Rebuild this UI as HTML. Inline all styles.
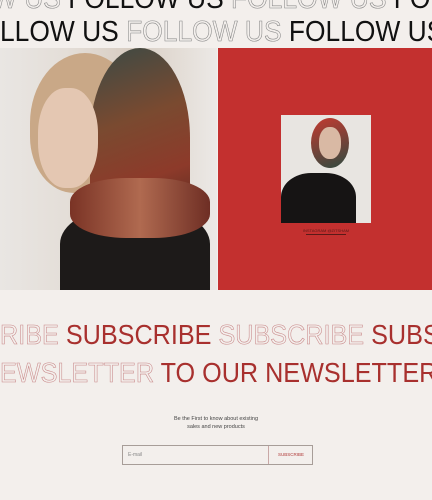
<!DOCTYPE html>
<html><head><meta charset="utf-8"><style>
*{margin:0;padding:0;box-sizing:border-box}
body{width:432px;height:500px;background:#f3efec;overflow:hidden;position:relative;font-family:"Liberation Sans",sans-serif}
.clip{position:absolute;left:0;width:432px;overflow:hidden}
.row{position:absolute;white-space:nowrap;font-family:"Liberation Sans",sans-serif;transform-origin:0 0}
.k{color:#111}.ko{color:transparent;-webkit-text-stroke:.6px #888}
.r{color:#a8302e}.ro{color:transparent;-webkit-text-stroke:.6px #c9898a}
</style></head><body>
<div class="clip" style="top:0;height:48px">
<div class="row" style="top:-16px;left:-8px;font-size:29px;line-height:30px;transform:scaleX(.91)"><span class="ko">W US </span><span class="k">FOLLOW US </span><span class="ko">FOLLOW US </span><span class="k">FO</span></div>
<div class="row" style="top:17px;left:0px;font-size:29px;line-height:30px;transform:scaleX(.91)"><span class="k">LLOW US </span><span class="ko">FOLLOW US </span><span class="k">FOLLOW US</span></div>
</div>

<div style="position:absolute;left:0;top:48px;width:217px;height:242px;background:linear-gradient(90deg,#e9e6e3 0%,#e4ded8 30%,#d8cdc2 60%,#ece9e6 100%);overflow:hidden">
 <div style="position:absolute;left:30px;top:5px;width:110px;height:140px;border-radius:50% 50% 40% 40%;background:#c9a887"></div>
 <div style="position:absolute;left:90px;top:0px;width:100px;height:180px;border-radius:50% 50% 20% 20%;background:linear-gradient(160deg,#3b4a45,#7a4a30 40%,#8d3a2a 70%,#4a2a20)"></div>
 <div style="position:absolute;left:38px;top:40px;width:60px;height:100px;border-radius:45%;background:#e4c7b2"></div>
 <div style="position:absolute;left:60px;top:160px;width:150px;height:90px;border-radius:40% 40% 0 0;background:#1d1a19"></div>
 <div style="position:absolute;left:70px;top:130px;width:140px;height:60px;border-radius:40%;background:linear-gradient(90deg,#7a3325,#b06a50,#6e2e24)"></div>
</div>
<div style="position:absolute;left:218px;top:48px;width:214px;height:242px;background:#c3302f">
 <div style="position:absolute;left:63px;top:67px;width:90px;height:108px;background:#e8e5e1;overflow:hidden">
  <div style="position:absolute;left:30px;top:3px;width:38px;height:50px;border-radius:50%;background:linear-gradient(160deg,#c43a30,#2f4a40)"></div>
  <div style="position:absolute;left:38px;top:12px;width:22px;height:32px;border-radius:45%;background:#d9b9a4"></div>
  <div style="position:absolute;left:0;top:58px;width:75px;height:60px;border-radius:40% 40% 0 0;background:#161414"></div>
 </div>
 <div style="position:absolute;left:63px;top:180px;width:90px;text-align:center;font-size:4px;color:#5a1a18">INSTAGRAM @ZITSHAM</div>
 <div style="position:absolute;left:88px;top:186px;width:40px;height:1px;background:#5a1a18"></div>
</div>

<div class="clip" style="top:300px;height:100px">
<div class="row" style="top:19px;left:0px;font-size:28px;line-height:32px;transform:scaleX(.9)"><span class="ro">RIBE </span><span class="r">SUBSCRIBE </span><span class="ro">SUBSCRIBE </span><span class="r">SUBS</span></div>
<div class="row" style="top:57px;left:0px;font-size:28px;line-height:32px;transform:scaleX(.9)"><span class="ro">EWSLETTER </span><span class="r">TO OUR NEWSLETTER</span></div>
</div>

<div style="position:absolute;left:0;width:432px;top:415px;text-align:center;font-size:5.5px;line-height:8px;color:#444">Be the First to know about existing<br>sales and new products</div>
<div style="position:absolute;left:122px;top:445px;width:191px;height:20px;border:1px solid #a79d98">
 <div style="position:absolute;left:5px;top:6px;font-size:5px;color:#888">E-mail</div>
 <div style="position:absolute;left:145px;top:0;width:1px;height:18px;background:#c9a8a6"></div>
 <div style="position:absolute;left:146px;top:6px;width:44px;text-align:center;font-size:4.5px;color:#b03a38">SUBSCRIBE</div>
</div>
</body></html>
